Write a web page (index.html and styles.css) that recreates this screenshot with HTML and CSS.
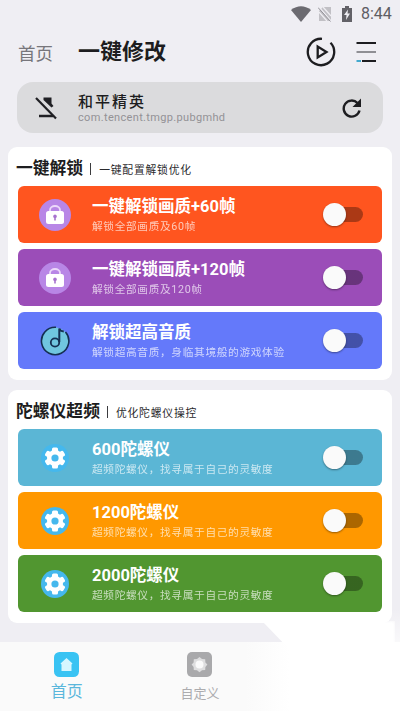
FILE: index.html
```html
<!DOCTYPE html>
<html lang="zh-CN">
<head>
<meta charset="utf-8">
<title>一键修改</title>
<link rel="stylesheet" href="styles.css">
</head>
<body>
<svg class="defs" width="0" height="0">
  <symbol id="lock" viewBox="0 0 32 32">
    <circle cx="16" cy="16" r="16" fill="#b886e6"/>
    <path d="M11 12.500v-1.500a5 4 0 0 1 10 0v1.500" fill="none" stroke="#ecd9fa" stroke-width="1.800"/>
    <rect x="7" y="12" width="18" height="13" rx="2.500" fill="#fff"/>
    <path d="M16 15.500a1.900 1.900 0 0 1 .8 3.600v2.500h-1.600v-2.500a1.900 1.900 0 0 1 .8-3.600z" fill="#a873cf"/>
  </symbol>
  <symbol id="music" viewBox="0 0 32 32">
    <circle cx="16" cy="16" r="13.500" fill="#70c6df"/>
    <path d="M17 2.300A13.700 13.700 0 1 0 26.500 7" fill="none" stroke="#153052" stroke-width="1.600"/>
    <circle cx="16" cy="17.500" r="4.200" fill="none" stroke="#153052" stroke-width="1.800"/>
    <path d="M20.300 17V3.500q1 2.800 4.500 3" fill="none" stroke="#153052" stroke-width="2"/>
  </symbol>
  <symbol id="gear" viewBox="0 0 32 32">
    <circle cx="16" cy="16" r="14" fill="#45b8ed"/>
    <g fill="#fff">
      <circle cx="16" cy="16" r="8"/>
      <rect x="13" y="5.500" width="6" height="21" rx="1.500"/>
      <rect x="13" y="5.500" width="6" height="21" rx="1.500" transform="rotate(60 16 16)"/>
      <rect x="13" y="5.500" width="6" height="21" rx="1.500" transform="rotate(120 16 16)"/>
    </g>
    <circle cx="16" cy="16" r="3.600" fill="#45b8ed"/>
  </symbol>
</svg>

<div class="screen">
  <div class="status">
    <svg class="wifi" width="20" height="16" viewBox="0 0 20 16"><path d="M0 4Q10-3.500 20 4L10 16z" fill="#6b6a70"/></svg>
    <svg class="sim" width="14" height="16" viewBox="0 0 14 16"><path d="M5 1h8v14H1V5z" fill="#c1c0c5"/><path d="M1 1l12 14M5 1l8 9M1 6l8 9" stroke="#efeef3" stroke-width="1.200"/><path d="M0 1.500l12.500 14" stroke="#929197" stroke-width="1"/></svg>
    <svg class="battery" width="10" height="16" viewBox="0 0 10 16"><path d="M3 0h4v2h3v14H0V2h3z" fill="#626167"/><path d="M6 3.500L2 9h2.500L4 14l4-6.500H5.500z" fill="#efeef3"/></svg>
    <span class="clock">8:44</span>
  </div>

  <header class="topbar">
    <span class="crumb">首页</span>
    <h1>一键修改</h1>
    <svg class="play" width="30" height="30" viewBox="0 0 30 30" fill="none" stroke="#1d1d20" stroke-width="2.300"><path d="M16 1.800A13.200 13.200 0 1 0 24.500 5.800"/><path d="M11.700 9.500v11l8.800-5.500z"/></svg>
    <svg class="menu" width="20" height="22" viewBox="0 0 20 22"><path d="M.5 2H20M6 20H20" stroke="#1d1d20" stroke-width="2"/><path d="M.5 11H20" stroke="#77767b" stroke-width="1.600"/><path d="M.5 20H5" stroke="#43a9ce" stroke-width="2"/></svg>
  </header>

  <section class="app">
    <svg class="app-icon" width="22" height="24" viewBox="0 0 22 24"><path d="M8.500 1.500h8v6l2 2.500-2 1.500L8.500 4z" fill="#202024"/><path d="M4 20h14" stroke="#202024" stroke-width="2.500"/><path d="M1 2l20 20.500" stroke="#202024" stroke-width="2.200"/></svg>
    <div class="app-info">
      <div class="app-name">和平精英</div>
      <div class="app-id">com.tencent.tmgp.pubgmhd</div>
    </div>
    <svg class="reload" width="20" height="20" viewBox="0 0 20 20"><path d="M15.500 5A8 8 0 1 0 17.500 12.500" fill="none" stroke="#1d1d20" stroke-width="2.400"/><path d="M19 .5V9h-8.500z" fill="#1d1d20"/></svg>
  </section>

  <main>
    <section class="card">
      <div class="heading"><h2>一键解锁</h2><i></i><span>一键配置解锁优化</span></div>
      <div class="row red"><svg class="icon"><use href="#lock"/></svg><div class="text"><h3>一键解锁画质+60帧</h3><p>解锁全部画质及60帧</p></div><div class="switch"></div></div>
      <div class="row purple"><svg class="icon"><use href="#lock"/></svg><div class="text"><h3>一键解锁画质+120帧</h3><p>解锁全部画质及120帧</p></div><div class="switch"></div></div>
      <div class="row blue"><svg class="icon"><use href="#music"/></svg><div class="text"><h3>解锁超高音质</h3><p>解锁超高音质，身临其境般的游戏体验</p></div><div class="switch"></div></div>
    </section>
    <section class="card">
      <div class="heading"><h2>陀螺仪超频</h2><i></i><span>优化陀螺仪操控</span></div>
      <div class="row cyan"><svg class="icon"><use href="#gear"/></svg><div class="text"><h3>600陀螺仪</h3><p>超频陀螺仪，找寻属于自己的灵敏度</p></div><div class="switch"></div></div>
      <div class="row orange"><svg class="icon"><use href="#gear"/></svg><div class="text"><h3>1200陀螺仪</h3><p>超频陀螺仪，找寻属于自己的灵敏度</p></div><div class="switch"></div></div>
      <div class="row green"><svg class="icon"><use href="#gear"/></svg><div class="text"><h3>2000陀螺仪</h3><p>超频陀螺仪，找寻属于自己的灵敏度</p></div><div class="switch"></div></div>
    </section>
  </main>

  <nav>
    <div class="tab active">
      <svg width="25" height="25" viewBox="0 0 25 25"><rect width="25" height="25" rx="5.500" fill="#39c3f3"/><path d="M12.500 6l6 5.500-1 1V19h-10v-6.500l-1-1z" fill="#d5f6ff"/></svg>
      <span>首页</span>
    </div>
    <div class="tab">
      <svg width="25" height="25" viewBox="0 0 25 25"><rect width="25" height="25" rx="5" fill="#a9a9ab"/><path d="M12.500 5l2.500 2 3.200.2.200 3.200 2 2.100-2 2.400-.2 3.200-3.200.2-2.500 2-2.500-2-3.200-.2-.2-3.200-2-2.400 2-2.100.2-3.200L10 7z" fill="#dededf"/><circle cx="12.500" cy="12.500" r="4" fill="#fafafa"/></svg>
      <span>自定义</span>
    </div>
  </nav>
  <div class="glow"></div>
  <div class="glow-edge"></div>
</div>
</body>
</html>
```

FILE: styles.css
```css
* { box-sizing: border-box; margin: 0; padding: 0; }
body { font-family: Roboto, "Noto Sans CJK SC", sans-serif; background: #efeef3; color: #1d1d20; }
.defs { display: block; }
.screen { position: relative; width: 400px; height: 711px; overflow: hidden; display: flex; flex-direction: column; background: #efeef3; white-space: nowrap; }
.screen svg { display: block; flex: none; }

.status { height: 27px; display: flex; align-items: center; padding-left: 291px; }
.sim { margin-left: 7px; }
.battery { margin-left: 10px; }
.clock { margin-left: 9px; font-size: 16px; line-height: 27px; color: #5e5d63; }

.topbar { height: 55px; display: flex; align-items: center; padding: 0 24px 5px 18px; }
.crumb { width: 60px; font-size: 17.5px; color: #77767b; }
h1 { flex: 1; font-size: 22px; line-height: 32px; font-weight: 700; }
.play { margin-right: 20px; }

.app { height: 51px; margin: 0 17px; padding: 0 21px 0 18px; display: flex; align-items: center; border-radius: 16px; background: #dbdbdd; }
.app-info { flex: 1; margin-left: 21px; padding-top: 2px; }
.app-name { font-size: 15px; line-height: 18px; font-weight: 500; letter-spacing: 2px; }
.app-id { font-size: 11px; line-height: 13px; letter-spacing: .34px; color: #939296; }

main { padding: 14px 8px 0; display: flex; flex-direction: column; gap: 10px; }
.card { height: 233px; padding: 0 10px; border-radius: 9px; background: #fff; display: flex; flex-direction: column; gap: 6px; }
.heading { height: 33px; padding-top: 10px; display: flex; align-items: center; margin-left: -2px; }
.heading h2 { font-size: 16.8px; line-height: 23px; font-weight: 700; }
.heading i { width: 1px; height: 12px; margin: 0 8px 0 7px; background: #3b3b3e; }
.heading span { font-size: 10.8px; letter-spacing: .8px; color: #29292c; }

.row { height: 57px; display: flex; align-items: center; padding: 0 19px 0 21px; border-radius: 6px; color: #fff; }
.icon { width: 32px; height: 32px; }
.text { flex: 1; margin-left: 21px; padding-top: 3px; }
.text h3 { font-size: 16.5px; line-height: 22px; font-weight: 700; }
.text p { font-size: 10.7px; line-height: 18px; letter-spacing: .65px; opacity: .68; }
.switch { position: relative; width: 38px; height: 15px; border-radius: 8px; background: linear-gradient(90deg, transparent 12px, rgba(0, 0, 0, .33) 12px); }
.switch::before { content: ""; position: absolute; left: -2px; top: -4px; width: 23px; height: 23px; border-radius: 50%; background: #fafafa; box-shadow: 0 1px 2px rgba(0, 0, 0, .4); }
.red { background: #ff551f; }
.purple { background: #9b4db8; }
.blue { background: #6479fa; }
.cyan { background: #5bb6d5; }
.orange { background: #ff9800; }
.green { background: #519630; }

nav { height: 69px; margin-top: auto; display: flex; background: linear-gradient(90deg, #fafafa 245px, #fff 290px); }
.tab { width: 133.3px; padding-top: 10px; display: flex; flex-direction: column; align-items: center; color: #acacaf; }
.tab span { margin-top: 6px; font-size: 13px; line-height: 22px; }
.tab.active span { margin-top: 3px; font-size: 16px; line-height: 23px; color: #5ab7dc; }

/* White haze that fades out the bottom-right corner */
.glow { position: absolute; left: 255px; top: 621px; width: 140px; height: 94px; background: #fff; clip-path: polygon(7px 0, 100% 0, 100% 100%, 50px 100%, 34px 28px); filter: blur(1.5px); }
.glow-edge { position: absolute; left: 390px; top: 608px; width: 10px; height: 103px; background: linear-gradient(rgba(255, 255, 255, 0), #fff 54px); }
```
